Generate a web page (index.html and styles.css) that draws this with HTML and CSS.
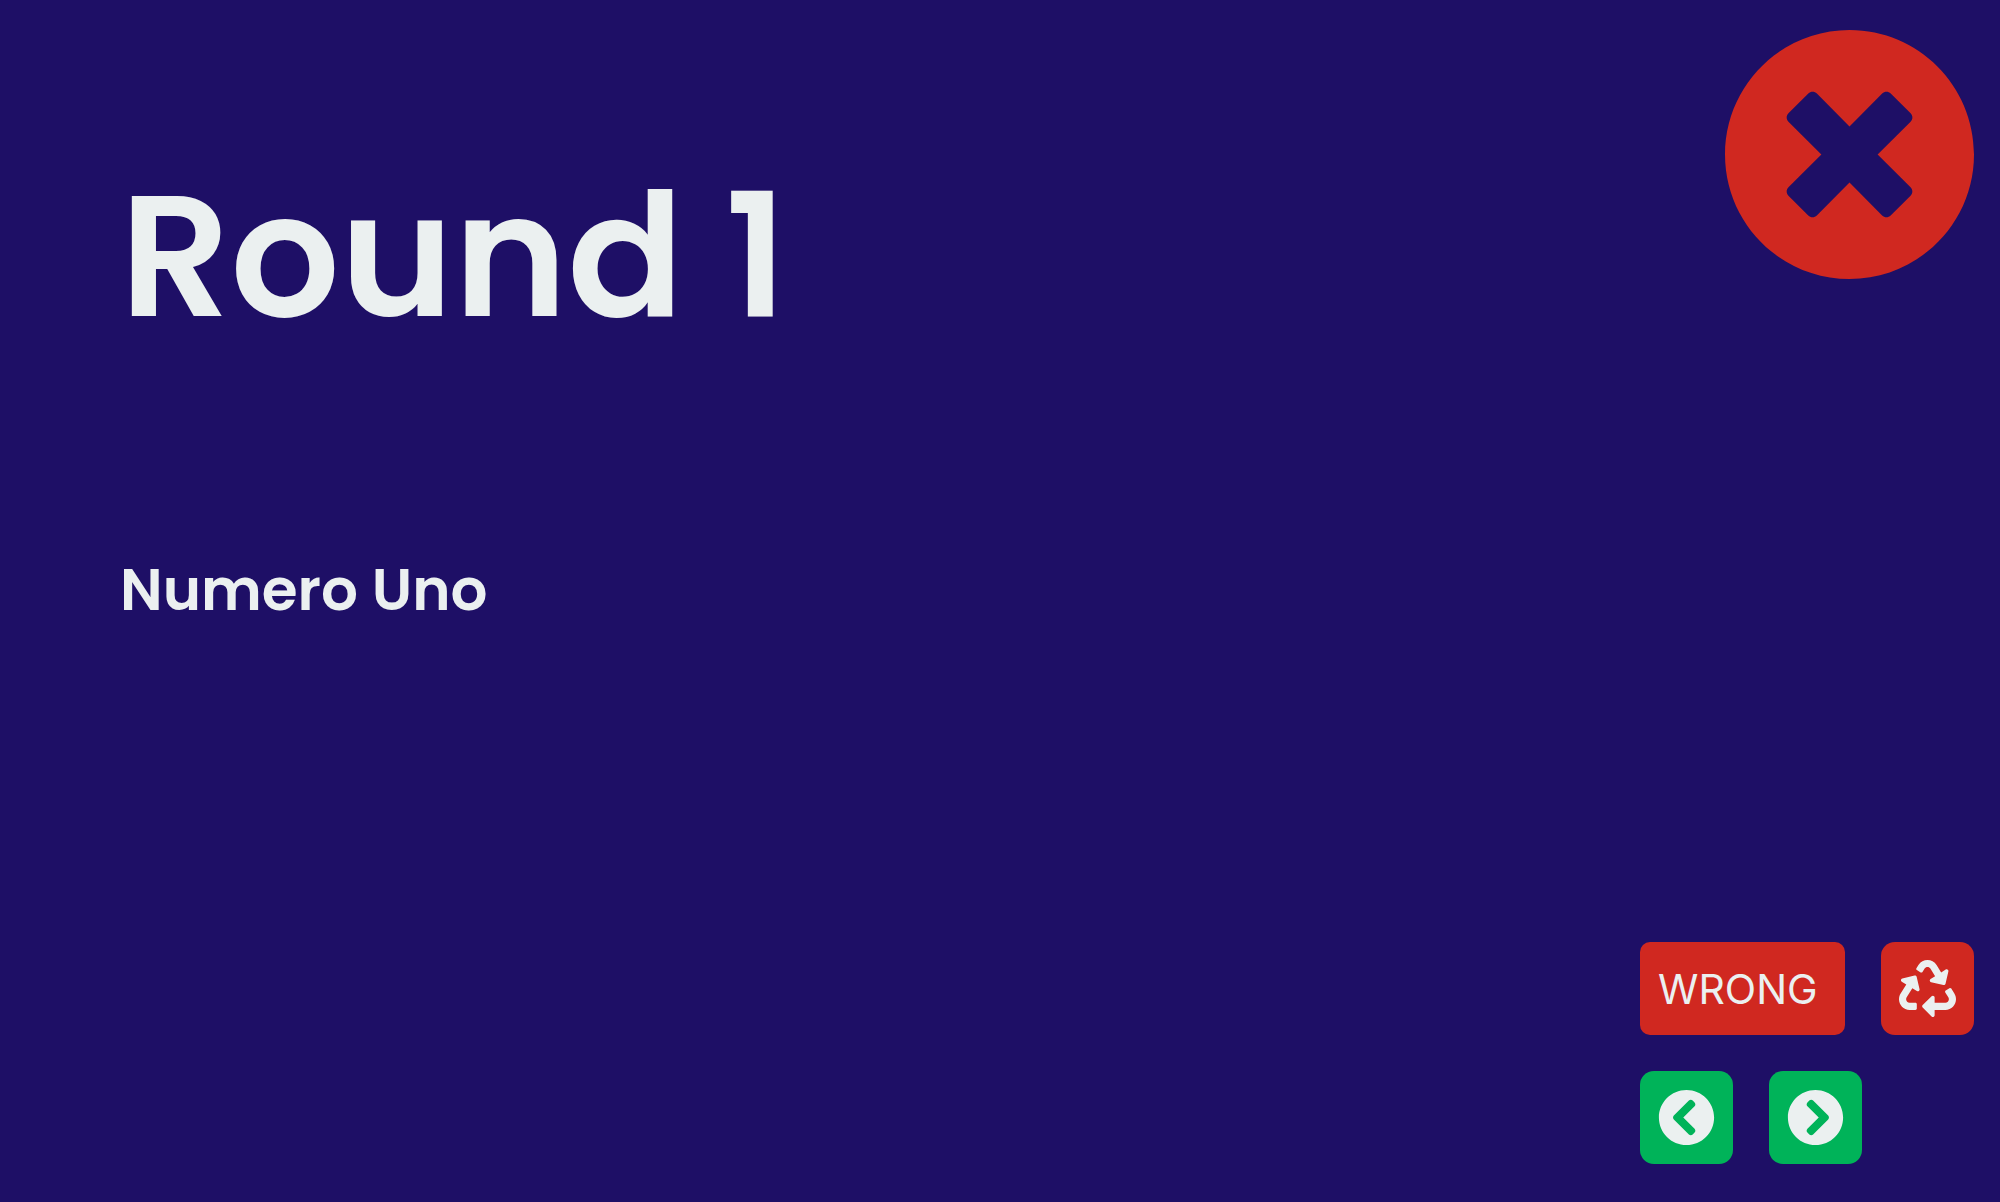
FILE: index.html
```html
<!DOCTYPE html>
<html lang="en">
<head>
<meta charset="utf-8">
<meta name="viewport" content="width=device-width, initial-scale=1">
<title>Round 1</title>
<link rel="stylesheet" href="styles.css">
</head>
<body>
<main class="round">
  <div class="heading">
    <h1 class="title">Round 1</h1>
    <p class="subtitle">Numero Uno</p>
  </div>
  <aside class="side">
    <svg class="mark" viewBox="8 8 496 496" role="img" aria-label="Wrong answer"><path d="M256 8C119 8 8 119 8 256s111 248 248 248 248-111 248-248S393 8 256 8zm121.600 313.100c4.700 4.700 4.700 12.300 0 17L338 377.600c-4.700 4.700-12.300 4.700-17 0L256 312l-65.100 65.600c-4.700 4.700-12.300 4.700-17 0L134.400 338c-4.700-4.700-4.700-12.300 0-17l65.600-65-65.600-65.100c-4.700-4.700-4.700-12.300 0-17l39.600-39.600c4.700-4.700 12.300-4.700 17 0l65 65.700 65.100-65.600c4.700-4.700 12.300-4.700 17 0l39.600 39.600c4.700 4.700 4.700 12.300 0 17L312 256l65.600 65.100z"/></svg>
    <div class="controls">
      <div class="row">
        <button class="button wrong" type="button">WRONG</button>
        <button class="button reset" type="button" aria-label="Reset"><svg class="icon" viewBox="0 0 512 512" aria-hidden="true"><path d="M184.561 261.903c3.232 13.997-12.123 24.635-24.068 17.168l-40.736-25.455-50.867 81.402C55.606 356.273 70.960 384 96.012 384H148c6.627 0 12 5.373 12 12v40c0 6.627-5.373 12-12 12H96.115c-75.334 0-121.302-83.048-81.408-146.880l50.822-81.388-40.725-25.448c-12.081-7.547-8.966-25.961 4.879-29.158l110.237-25.450c8.611-1.988 17.201 3.381 19.189 11.990l25.452 110.237zm98.561-182.915l41.289 66.076-40.740 25.457c-12.051 7.528-9 25.953 4.879 29.158l110.237 25.450c8.672 1.999 17.215-3.438 19.189-11.990l25.450-110.237c3.197-13.844-11.990-24.719-24.068-17.168l-40.687 25.424-41.263-66.082c-37.521-60.033-125.209-60.171-162.816 0l-17.963 28.766c-3.510 5.620-1.800 13.021 3.820 16.533l33.919 21.195c5.620 3.512 13.024 1.803 16.536-3.817l17.961-28.743c12.712-20.341 41.973-19.676 54.257-.022zM497.288 301.120l-27.515-44.065c-3.511-5.623-10.916-7.334-16.538-3.821l-33.861 21.159c-5.620 3.512-7.330 10.915-3.818 16.536l27.564 44.112c13.257 21.211-2.057 48.960-27.136 48.960H320V336.020c0-14.213-17.242-21.383-27.313-11.313l-80 79.981c-6.249 6.248-6.249 16.379 0 22.627l80 79.989C302.689 517.308 320 510.300 320 495.989V448h95.880c75.274 0 121.335-82.997 81.408-146.880z"/></svg></button>
      </div>
      <div class="row">
        <button class="button step" type="button" aria-label="Previous"><svg class="icon" viewBox="0 0 512 512" aria-hidden="true"><path d="M256 504C119 504 8 393 8 256S119 8 256 8s248 111 248 248-111 248-248 248zM142.100 273l135.500 135.500c9.400 9.400 24.600 9.400 33.900 0l17-17c9.400-9.400 9.400-24.600 0-33.900L226.900 256l101.600-101.600c9.400-9.400 9.400-24.600 0-33.900l-17-17c-9.400-9.400-24.600-9.400-33.900 0L142.100 239c-9.400 9.400-9.400 24.600 0 34z"/></svg></button>
        <button class="button step" type="button" aria-label="Next"><svg class="icon" viewBox="0 0 512 512" aria-hidden="true"><path d="M256 8c137 0 248 111 248 248S393 504 256 504 8 393 8 256 119 8 256 8zm113.900 231L234.400 103.500c-9.400-9.400-24.600-9.400-33.900 0l-17 17c-9.400 9.400-9.400 24.600 0 33.900L285.100 256 183.500 357.600c-9.400 9.400-9.400 24.600 0 33.900l17 17c9.400 9.400 24.600 9.400 33.900 0L369.900 273c9.400-9.400 9.400-24.600 0-34z"/></svg></button>
      </div>
    </div>
  </aside>
</main>
</body>
</html>
```
FILE: styles.css
```css
* {
  box-sizing: border-box;
}

body {
  margin: 0;
  background: #1e0f66;
  color: #ebf0f0;
  font-family: Poppins, Inter, sans-serif;
}

.round {
  display: flex;
  justify-content: space-between;
  min-height: 100vh;
  padding: 30px 26px 38px 120px;
}

.heading {
  padding-top: 124px;
}

.title {
  margin: 0 0 188px;
  font-size: 172px;
  font-weight: 600;
  line-height: 204px;
}

.subtitle {
  margin: 0;
  font-size: 58px;
  font-weight: 600;
  line-height: 88px;
}

.side {
  display: flex;
  flex-direction: column;
  align-items: flex-end;
  justify-content: space-between;
}

.mark {
  width: 249px;
  height: 249px;
  fill: #d02820;
}

.controls {
  display: flex;
  flex-direction: column;
  gap: 36px;
}

.row {
  display: flex;
  gap: 36px;
}

.button {
  display: flex;
  align-items: center;
  padding: 18px;
  border: 0;
  border-radius: 14px;
  color: inherit;
  cursor: pointer;
}

.wrong {
  width: 205px;
  border-radius: 10px;
  background: #d02820;
  font-family: Inter, sans-serif;
  font-size: 41px;
}

.reset {
  background: #d02820;
}

.step {
  background: #00b359;
}

.icon {
  width: 57px;
  height: 57px;
  fill: currentColor;
}
```
